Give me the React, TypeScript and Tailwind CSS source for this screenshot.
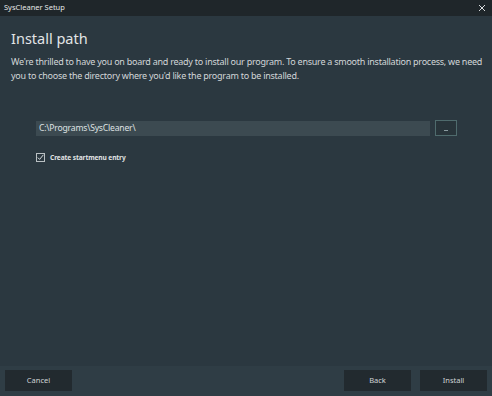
import { useState } from 'react';

export default function App() {
  const [path, setPath] = useState('C:\\Programs\\SysCleaner\\');
  const [startMenu, setStartMenu] = useState(true);

  return (
    <div
      className="flex flex-col w-[492px] h-[396px] bg-[#2b3840] text-[#d6dadc] overflow-hidden"
      style={{ fontFamily: '"Segoe UI", "Noto Sans", sans-serif' }}
    >
      <div className="flex items-center justify-between h-[16px] bg-[#1f262a] pl-[4px] pr-[6px]">
        <span className="text-[7.5px] text-[#e4e6e7]">SysCleaner Setup</span>
        <svg width="8" height="8" viewBox="0 0 8 8" className="stroke-[#d8dbdd]">
          <path d="M1 1L7 7M7 1L1 7" strokeWidth="1" fill="none" />
        </svg>
      </div>

      <div className="flex flex-col flex-1 pl-[11px] pr-[4px]">
        <h1 className="mt-[12px] text-[14.5px] leading-[20px] text-[#e2e5e6]">Install path</h1>
        <p className="mt-[7px] text-[9px] tracking-[-0.25px] leading-[14px] text-[#d2d6d8]">
          We're thrilled to have you on board and ready to install our program. To ensure a smooth installation process, we need
          you to choose the directory where you'd like the program to be installed.
        </p>

        <div className="flex items-center gap-[5px] mt-[37px] ml-[25px]">
          <input
            value={path}
            onChange={(e) => setPath(e.target.value)}
            className="w-[394px] h-[15px] bg-[#3c4a51] px-[3px] text-[8.6px] tracking-[-0.2px] text-[#dfe2e3] outline-none"
          />
          <button className="flex items-end justify-center w-[22px] h-[16px] border border-[#4f6b6d] bg-[#28343a] pb-[4px]">
            <span className="block w-[4px] h-[1px] bg-[#8a9a9f]" />
          </button>
        </div>

        <label className="flex items-center gap-[5px] mt-[17px] ml-[25px] cursor-pointer">
          <span
            onClick={() => setStartMenu(!startMenu)}
            className="flex items-center justify-center w-[9px] h-[9px] border border-[#b9c0c3]"
          >
            {startMenu && (
              <svg width="7" height="7" viewBox="0 0 7 7">
                <path d="M0.8 3.6L2.6 5.4L6.4 0.8" stroke="#d8dcde" strokeWidth="1" fill="none" />
              </svg>
            )}
          </span>
          <span className="text-[6.6px] tracking-[-0.1px] font-bold text-[#e0e3e4]">Create startmenu entry</span>
        </label>
      </div>

      <div className="flex items-center justify-between h-[30px] bg-[#2f3d45] px-[5px] pb-[1px]">
        <button className="w-[67px] h-[21px] bg-[#222a2f] text-[7.5px] text-[#d0d4d6]">Cancel</button>
        <div className="flex gap-[9px]">
          <button className="w-[67px] h-[21px] bg-[#222a2f] text-[7.5px] text-[#d0d4d6]">Back</button>
          <button className="w-[67px] h-[21px] bg-[#222a2f] text-[7.5px] text-[#d0d4d6]">Install</button>
        </div>
      </div>
    </div>
  );
}
